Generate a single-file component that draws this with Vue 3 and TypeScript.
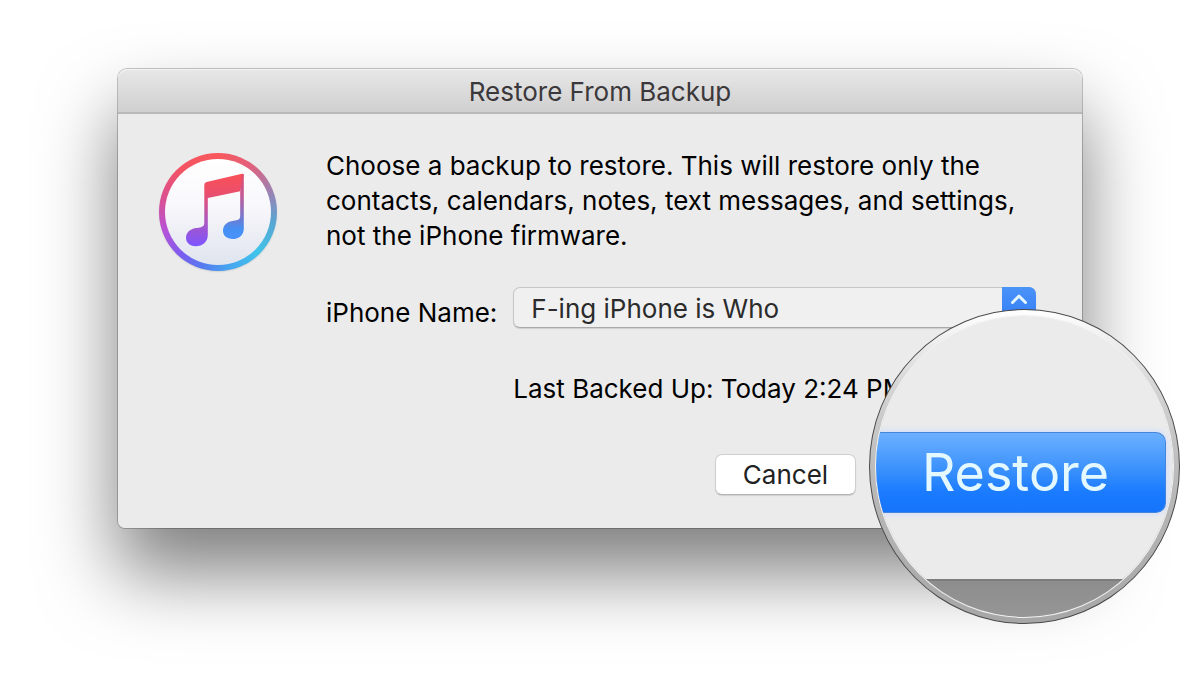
<script setup lang="ts">
import { ref } from 'vue'

const backups: string[] = ['F-ing iPhone is Who']
const selected = ref<string>(backups[0])
</script>

<template>
  <main class="page">
    <section class="dialog" role="dialog" aria-labelledby="dialog-title">
      <header class="titlebar">
        <h1 id="dialog-title">Restore From Backup</h1>
      </header>

      <div class="body">
        <svg class="logo" viewBox="0 0 120 120" aria-hidden="true">
          <defs>
            <linearGradient id="face" x1="0" y1="0" x2="0" y2="1">
              <stop offset="0" stop-color="#ffffff" />
              <stop offset="0.45" stop-color="#f8f7fb" />
              <stop offset="1" stop-color="#dfe4ee" />
            </linearGradient>
            <linearGradient id="note" x1="0" y1="0" x2="0" y2="1">
              <stop offset="0" stop-color="#fb4f57" />
              <stop offset="0.28" stop-color="#e94f6c" />
              <stop offset="0.6" stop-color="#b356b8" />
              <stop offset="1" stop-color="#7c55ff" />
            </linearGradient>
            <linearGradient id="stem" x1="0" y1="0" x2="0" y2="1">
              <stop offset="0" stop-color="#e05070" />
              <stop offset="0.3" stop-color="#c9568f" />
              <stop offset="0.65" stop-color="#7a76cc" />
              <stop offset="0.85" stop-color="#4490f4" />
              <stop offset="1" stop-color="#4a92fb" />
            </linearGradient>
          </defs>
          <circle cx="60" cy="61" r="58" class="logo-shade" />
          <foreignObject x="1" y="1" width="118" height="118">
            <div class="logo-ring"></div>
          </foreignObject>
          <circle cx="60" cy="60" r="53" fill="url(#face)" />
          <path
            d="M46.3 33 Q46.3 30.6 48.6 30 L84 21.8 Q85.8 21.5 85.8 23.4 L82.2 39.3 L49.8 46 V83 C49.8 90 44.5 94.2 37.6 94.2 C31.8 94.2 28 90.8 28 85.8 C28 80.2 32.4 76.4 38.8 75.9 C44 75.4 46.3 74.6 46.3 71 Z"
            fill="url(#note)"
          />
          <path
            d="M85.8 23.4 V76.4 C85.8 83 81 87 74.6 87 C68.8 87 65 83.6 65 78.8 C65 73.4 69.2 69.4 75.6 68.8 C80 68.3 82.2 67.4 82.2 64 V39.3 L84.2 21.8 Q85.8 21.5 85.8 23.4 Z"
            fill="url(#stem)"
          />
        </svg>

        <div class="content">
          <p class="message">
            Choose a backup to restore. This will restore only the<br />
            contacts, calendars, notes, text messages, and settings,<br />
            not the iPhone firmware.
          </p>

          <div class="field">
            <label for="backup">iPhone Name:</label>
            <div class="picker">
              <select id="backup" v-model="selected">
                <option v-for="name in backups" :key="name" :value="name">{{ name }}</option>
              </select>
              <span class="stepper">
                <svg viewBox="0 0 34 40" aria-hidden="true">
                  <path d="M10.5 15.5 17 9l6.5 6.5M10.5 25.5 17 32l6.5-6.5" />
                </svg>
              </span>
            </div>
            <p class="status">Last Backed Up: Today 2:24 PM</p>
          </div>

          <div class="actions">
            <button type="button" class="cancel">Cancel</button>
          </div>
        </div>
      </div>

      <div class="lens">
        <div class="lens-glass">
          <div class="lens-window">
            <button type="button" class="restore">Restore</button>
          </div>
        </div>
      </div>
    </section>
  </main>
</template>

<style>
body {
  margin: 0;
  background: #fff;
}
</style>

<style scoped>
* {
  box-sizing: border-box;
}

.page {
  min-height: 100vh;
  padding: 68px 117px;
  overflow: hidden;
  background: #fff;
  font-family: Inter, "Liberation Sans", sans-serif;
  font-size: 26px;
  line-height: 35px;
  color: #000;
}

.dialog {
  position: relative;
  border: 1px solid rgba(0, 0, 0, 0.22);
  border-radius: 10px 10px 8px 8px;
  background: #ebebeb;
  background-clip: padding-box;
  box-shadow: 0 44px 76px rgba(0, 0, 0, 0.5);
}

.titlebar {
  display: flex;
  align-items: center;
  justify-content: center;
  height: 45px;
  padding-top: 2px;
  border-bottom: 2px solid #b9b9b9;
  border-radius: 9px 9px 0 0;
  background: linear-gradient(#e8e8e8, #cfcfcf);
  box-shadow: inset 0 1px #f4f4f4;
}

h1 {
  margin: 0;
  font-size: 26px;
  font-weight: 400;
  color: #3b383b;
}

.body {
  display: flex;
  gap: 48px;
  padding: 34px 46px 33px 40px;
}

.logo {
  flex: none;
  width: 120px;
  height: 120px;
  margin-top: 4px;
  overflow: visible;
}

.logo-shade {
  fill: rgba(0, 0, 0, 0.25);
  filter: blur(1px);
}

.logo-ring {
  width: 118px;
  height: 118px;
  border-radius: 50%;
  background: conic-gradient(#f8585c, #e2607c 35deg, #9a82b4 70deg, #58a5d2 100deg, #40c4ea 135deg, #46a4f0 170deg, #557cf0 195deg, #7b5df0 220deg, #b552d8 250deg, #dc5090 285deg, #f45462 320deg, #f8585c);
}

.content {
  flex: 1;
  min-width: 0;
}

.message {
  margin: 0;
  white-space: nowrap;
}

.field {
  display: grid;
  grid-template-columns: auto 1fr;
  column-gap: 16px;
  row-gap: 41px;
  margin-top: 34px;
}

.field label {
  padding-top: 8px;
}

.picker {
  position: relative;
  height: 41px;
}

.picker select {
  width: 100%;
  height: 41px;
  padding: 1px 48px 0 17px;
  border: 1px solid #c6c6c6;
  border-bottom-color: #a9a9a9;
  border-radius: 7px;
  background: #f0f0f0;
  box-shadow: 0 1px 1px rgba(0, 0, 0, 0.12);
  appearance: none;
  font: inherit;
  color: #2b2b2b;
}

.stepper {
  position: absolute;
  top: 0;
  right: 0;
  width: 34px;
  height: 41px;
  border-radius: 0 7px 7px 0;
  background: linear-gradient(#4a93f8, #2f78f6);
  pointer-events: none;
}

.stepper svg {
  display: block;
  width: 34px;
  height: 40px;
  fill: none;
  stroke: #e4f6ff;
  stroke-width: 3;
  stroke-linecap: round;
  stroke-linejoin: round;
}

.status {
  grid-column: 2;
  margin: 0;
  white-space: nowrap;
}

.actions {
  display: flex;
  justify-content: flex-end;
  margin-top: 48px;
  padding-right: 180px;
}

.cancel {
  width: 141px;
  height: 41px;
  border: 1px solid #cfcfcf;
  border-bottom-color: #b4b4b4;
  border-radius: 7px;
  background: #fff;
  box-shadow: 0 1px 1px rgba(0, 0, 0, 0.12);
  font: inherit;
  color: #222;
}

.lens {
  position: absolute;
  top: 240px;
  right: -98px;
  width: 311px;
  height: 315px;
  padding: 5px;
  border: 1px solid #4a4a4a;
  border-radius: 50%;
  background: linear-gradient(#fff, #d4d4d4 25%, #bcbcbc 50%, #a6a6a6);
}

.lens-glass {
  height: 100%;
  border: 1px solid #f2f2f2;
  border-radius: 50%;
  overflow: hidden;
  background: linear-gradient(#8c8c8c, #969696) bottom / 100% 40px no-repeat;
}

.lens-window {
  height: 265px;
  padding: 116px 7px 0 0;
  border-bottom: 2px solid #7d7d7d;
  background: #ebebeb;
}

.restore {
  width: 100%;
  height: 81px;
  padding: 0 10px 0 0;
  border: 1px solid #4586dc;
  border-left: 0;
  border-radius: 0 10px 10px 0;
  background: linear-gradient(#6cb0ff, #3c92fc 45%, #1a7bff 75%, #1574fb);
  box-shadow: 0 0 6px 1px #cfdcff;
  font: inherit;
  font-size: 52px;
  line-height: 60px;
  color: #e4f8ff;
}
</style>
